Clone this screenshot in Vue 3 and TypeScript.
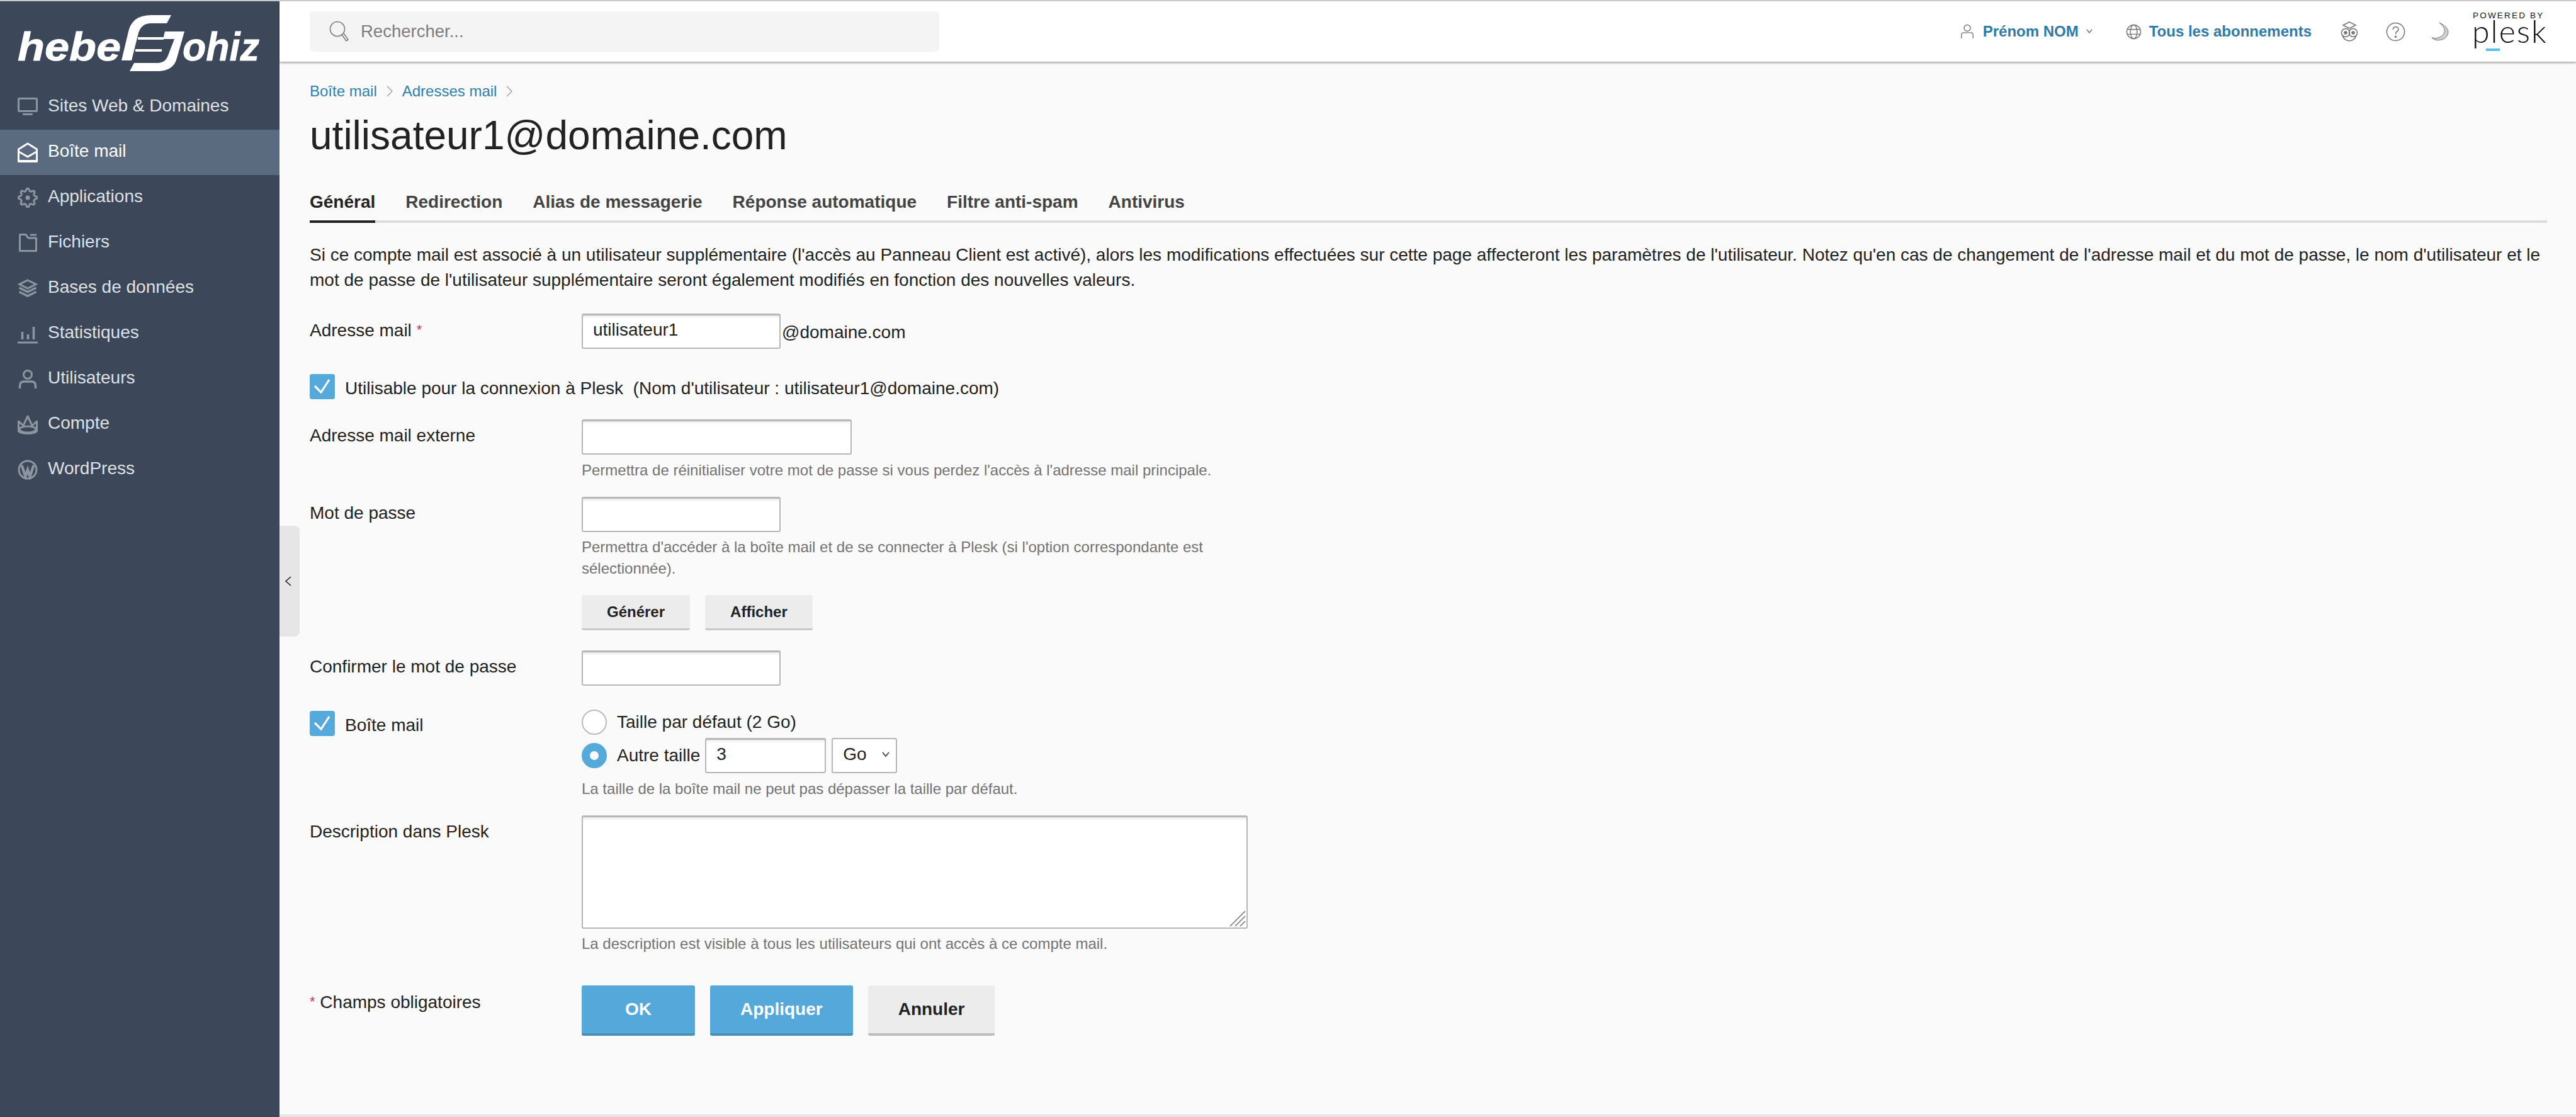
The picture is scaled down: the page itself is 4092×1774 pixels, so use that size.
<script setup lang="ts">
const nav: { id: string; label: string; active?: boolean }[] = [
  { id: 'web', label: 'Sites Web & Domaines' },
  { id: 'mail', label: 'Boîte mail', active: true },
  { id: 'apps', label: 'Applications' },
  { id: 'files', label: 'Fichiers' },
  { id: 'db', label: 'Bases de données' },
  { id: 'stats', label: 'Statistiques' },
  { id: 'users', label: 'Utilisateurs' },
  { id: 'account', label: 'Compte' },
  { id: 'wp', label: 'WordPress' },
]
const tabs = ['Général', 'Redirection', 'Alias de messagerie', 'Réponse automatique', 'Filtre anti-spam', 'Antivirus']

const gearPoints = (() => {
  const pts: string[] = []
  const n = 8
  for (let i = 0; i < n * 4; i++) {
    const a = ((i - 0.5) / (n * 4)) * Math.PI * 2
    const r = i % 4 < 2 ? 14.5 : 11
    pts.push(`${(16 + r * Math.cos(a)).toFixed(1)},${(16 + r * Math.sin(a)).toFixed(1)}`)
  }
  return pts.join(' ')
})()
</script>

<template>
  <div class="app">
    <aside class="side">
      <svg class="logo" viewBox="0 0 396 92" width="396" height="92">
        <text x="0" y="73" class="logo-text" textLength="164" lengthAdjust="spacingAndGlyphs">hebe</text>
        <path d="M165 73 L176 27 Q182 1 212 1 L244 1 L237 14 L212 14 Q197 14 192 29 L181 73 Z" fill="#fff" />
        <path d="M234 27 L265 27 L253 69 Q248 90 222 90 L178 90 L185 77 L222 77 Q235 77 239 65 L249 39 L231 39 Z" fill="#fff" />
        <path d="M191 38 L232 38 M187 57 L229 57" stroke="#fff" stroke-width="4" fill="none" />
        <text x="262" y="73" class="logo-text" textLength="122" lengthAdjust="spacingAndGlyphs">ohiz</text>
      </svg>
      <nav class="nav">
        <a v-for="item in nav" :key="item.id" class="nav-item" :class="{ active: item.active }">
          <svg class="nav-icon" viewBox="0 0 32 32" width="32" height="32" fill="none" stroke="currentColor" stroke-width="3">
            <template v-if="item.id === 'web'">
              <rect x="1.5" y="2.5" width="29" height="20" rx="1" />
              <rect x="8" y="26" width="16" height="3" rx="1" fill="currentColor" stroke="none" />
            </template>
            <template v-else-if="item.id === 'mail'">
              <path d="M16 2 L30.5 11 V30.5 H1.5 V11 Z" stroke-linejoin="round" />
              <path d="M2 15 L16 23 L30 15" />
              <path d="M1 28 H31 V32 H1 Z" fill="currentColor" stroke="none" />
            </template>
            <template v-else-if="item.id === 'apps'">
              <polygon :points="gearPoints" stroke-linejoin="round" />
              <circle cx="16" cy="16" r="3.5" fill="currentColor" stroke="none" />
            </template>
            <template v-else-if="item.id === 'files'">
              <path d="M3.5 2.5 H13 L17 8 H29.5 V28.5 H3.5 Z" stroke-linejoin="round" />
              <path d="M20 3 H30" />
            </template>
            <template v-else-if="item.id === 'db'">
              <path d="M16 3 L29 9.5 L16 16 L3 9.5 Z" stroke-width="3" />
              <path d="M2.5 15 L16 21.5 L29.5 15" stroke-width="3.4" />
              <path d="M2.5 21.5 L16 28 L29.5 21.5" stroke-width="3.4" />
            </template>
            <template v-else-if="item.id === 'stats'">
              <path d="M7.5 13 V25 M16.5 17 V25 M25.5 5 V25" stroke-width="3.6" />
              <path d="M1 30 H31" stroke-linecap="round" />
            </template>
            <template v-else-if="item.id === 'users'">
              <circle cx="16" cy="9" r="6.5" />
              <path d="M3.5 31 V27 Q3.5 20 10 20 H22 Q28.5 20 28.5 27 V31" stroke-width="3.4" />
            </template>
            <template v-else-if="item.id === 'account'">
              <path d="M1.5 11 L9 18 L16 3 L23 18 L30.5 11 V27 Q26 30.5 16 30.5 Q6 30.5 1.5 27 Z" stroke-linejoin="round" />
              <ellipse cx="16" cy="24" rx="13" ry="5" />
            </template>
            <template v-else>
              <circle cx="16" cy="16" r="14" stroke-width="3" />
              <path d="M6.5 9 L12.5 27 L16 16 L19.5 27 L25.5 9" stroke-width="4.2" />
            </template>
          </svg>
          <span>{{ item.label }}</span>
        </a>
      </nav>
    </aside>

    <button class="collapse" aria-label="Réduire">
      <svg viewBox="0 0 12 16" width="12" height="16" fill="none" stroke="#222" stroke-width="1.6"><path d="M10 1 L2 8 L10 15" /></svg>
    </button>

    <div class="main">
      <header class="topbar">
        <div class="search">
          <svg viewBox="0 0 32 34" width="32" height="34" fill="none" stroke="#7d7d7d" stroke-width="1.6">
            <circle cx="13" cy="13" r="11.5" />
            <path d="M20 22 L27 32 L30 30 L23 20" />
          </svg>
          <span>Rechercher...</span>
        </div>
        <div class="top-right">
          <a class="top-link user">
            <svg viewBox="0 0 24 26" width="22" height="24" fill="none" stroke="#777" stroke-width="1.5">
              <circle cx="12" cy="7" r="5.5" />
              <path d="M2 25 V19 Q2 15 6 15 H18 Q22 15 22 19 V25" />
            </svg>
            <b>Prénom NOM</b>
            <svg class="caret" viewBox="0 0 10 8" width="10" height="8" fill="none" stroke="#666" stroke-width="1.3"><path d="M1 1 L5 6 L9 1" /></svg>
          </a>
          <a class="top-link subs">
            <svg viewBox="0 0 26 26" width="25" height="25" fill="none" stroke="#777" stroke-width="1.5">
              <circle cx="13" cy="13" r="11.5" />
              <ellipse cx="13" cy="13" rx="5.5" ry="11.5" />
              <path d="M2.5 9 H23.5 M2.5 17 H23.5" />
            </svg>
            <b>Tous les abonnements</b>
          </a>
          <svg class="ic owl" viewBox="0 0 28 32" width="28" height="32" fill="none" stroke="#777" stroke-width="1.6">
            <path d="M14 1 L24 6 L14 11 L4 6 Z" />
            <circle cx="8" cy="18" r="6.5" />
            <circle cx="20" cy="18" r="6.5" />
            <path d="M3 22 Q5 30 14 31 Q23 30 25 22" />
            <circle cx="8" cy="18" r="2" fill="#777" />
            <circle cx="20" cy="18" r="2" fill="#777" />
          </svg>
          <svg class="ic help" viewBox="0 0 32 32" width="31" height="31" fill="none" stroke="#777" stroke-width="1.6">
            <circle cx="16" cy="16" r="14.5" />
            <path d="M11.5 12.5 Q12 8 16 8 Q20.5 8 20.5 12 Q20.5 14.5 17.5 16 Q16 17 16 20" />
            <circle cx="16" cy="24" r="1" fill="#777" />
          </svg>
          <svg class="ic moon" viewBox="0 0 28 30" width="28" height="30" fill="#d0d0d0" stroke="#777" stroke-width="1">
            <path d="M13 1 Q28 8 27 17 Q25 28 11 29 Q4 29 1 25 Q8 27 14 24 Q23 19 21 11 Q19 5 13 1 Z" />
          </svg>
          <div class="plesk">
            <span class="powered">POWERED BY</span>
            <span class="plesk-word">plesk</span>
            <i class="plesk-bar"></i>
          </div>
        </div>
      </header>

      <main class="content">
        <div class="crumbs">
          <a>Boîte mail</a>
          <svg viewBox="0 0 10 18" width="10" height="18" fill="none" stroke="#999" stroke-width="1.3"><path d="M1 1 L9 9 L1 17" /></svg>
          <a>Adresses mail</a>
          <svg viewBox="0 0 10 18" width="10" height="18" fill="none" stroke="#999" stroke-width="1.3"><path d="M1 1 L9 9 L1 17" /></svg>
        </div>
        <h1 class="title">utilisateur1@domaine.com</h1>
        <div class="tabs">
          <a v-for="(t, i) in tabs" :key="t" class="tab" :class="{ current: i === 0 }">{{ t }}</a>
        </div>
        <p class="intro">Si ce compte mail est associé à un utilisateur supplémentaire (l'accès au Panneau Client est activé), alors les modifications effectuées sur cette page affecteront les paramètres de l'utilisateur. Notez qu'en cas de changement de l'adresse mail et du mot de passe, le nom d'utilisateur et le mot de passe de l'utilisateur supplémentaire seront également modifiés en fonction des nouvelles valeurs.</p>

        <form class="form" @submit.prevent>
          <div class="row r-mail">
            <label class="lab">Adresse mail <em>*</em></label>
            <div class="field inline">
              <input class="inp w-s" type="text" value="utilisateur1" />
              <span class="suffix">@domaine.com</span>
            </div>
          </div>

          <div class="check-row r-login">
            <span class="check">
              <svg viewBox="0 0 40 40" width="40" height="40" fill="none" stroke="#fff" stroke-width="3.2"><path d="M8 19 L18 29 L31 9" /></svg>
            </span>
            <span class="check-text">Utilisable pour la connexion à Plesk&nbsp; (Nom d'utilisateur : utilisateur1@domaine.com)</span>
          </div>

          <div class="row r-ext">
            <label class="lab">Adresse mail externe</label>
            <div class="field">
              <input class="inp w-m" type="text" />
              <p class="hint">Permettra de réinitialiser votre mot de passe si vous perdez l'accès à l'adresse mail principale.</p>
            </div>
          </div>

          <div class="row r-pass">
            <label class="lab">Mot de passe</label>
            <div class="field">
              <input class="inp w-s" type="text" />
              <p class="hint tight">Permettra d'accéder à la boîte mail et de se connecter à Plesk (si l'option correspondante est sélectionnée).</p>
              <div class="small-btns">
                <button class="btn-s" type="button">Générer</button>
                <button class="btn-s" type="button">Afficher</button>
              </div>
            </div>
          </div>

          <div class="row r-confirm">
            <label class="lab">Confirmer le mot de passe</label>
            <div class="field"><input class="inp w-s" type="text" /></div>
          </div>

          <div class="row r-box">
            <div class="check-row boxlab">
              <span class="check">
                <svg viewBox="0 0 40 40" width="40" height="40" fill="none" stroke="#fff" stroke-width="3.2"><path d="M8 19 L18 29 L31 9" /></svg>
              </span>
              <span class="check-text">Boîte mail</span>
            </div>
            <div class="field">
              <div class="radio-line first">
                <span class="radio"></span>
                <span>Taille par défaut (2 Go)</span>
              </div>
              <div class="radio-line second">
                <span class="radio on"></span>
                <span class="other">Autre taille</span>
                <input class="inp w-num" type="text" value="3" />
                <div class="sel">
                  <span>Go</span>
                  <svg viewBox="0 0 12 8" width="12" height="8" fill="none" stroke="#333" stroke-width="1.6"><path d="M1 1 L6 7 L11 1" /></svg>
                </div>
              </div>
              <p class="hint">La taille de la boîte mail ne peut pas dépasser la taille par défaut.</p>
            </div>
          </div>

          <div class="row r-desc">
            <label class="lab">Description dans Plesk</label>
            <div class="field">
              <div class="area-wrap">
                <textarea class="inp area"></textarea>
                <svg class="grip" viewBox="0 0 26 26" width="26" height="26" fill="none" stroke="#777" stroke-width="1.6">
                  <path d="M1 25 L25 1 M9 25 L25 9 M17 25 L25 17" />
                </svg>
              </div>
              <p class="hint tight">La description est visible à tous les utilisateurs qui ont accès à ce compte mail.</p>
            </div>
          </div>

          <div class="row r-actions">
            <div class="req"><em>*</em> Champs obligatoires</div>
            <div class="actions">
              <button class="btn primary ok" type="button">OK</button>
              <button class="btn primary" type="button">Appliquer</button>
              <button class="btn" type="button">Annuler</button>
            </div>
          </div>
        </form>
      </main>
    </div>
  </div>
</template>

<style>
html, body { margin: 0; background: #fafafa; }
</style>

<style scoped>
.app {
  position: relative;
  display: flex;
  box-sizing: border-box;
  width: 4092px;
  height: 1774px;
  border-top: 2px solid #c9c9c9;
  overflow: hidden;
  font-family: "Liberation Sans", Arial, sans-serif;
  font-size: 28px;
  color: #222;
  background: #fafafa;
}
.side { width: 444px; flex: none; background: #3c4859; }
.logo { display: block; margin: 21px 0 0 28px; }
.logo-text { font: italic 700 63px "Liberation Sans", Arial, sans-serif; fill: #fff; stroke: #fff; stroke-width: 0.8px; }
.nav { margin-top: 19px; }
.nav-item {
  display: flex;
  align-items: center;
  height: 72px;
  padding-left: 28px;
  gap: 16px;
  font-size: 28px;
  color: #dde0e4;
  line-height: 66px;
}
.nav-item span { position: relative; top: -2px; }
.nav-icon { color: #8d95a1; flex: none; }
.nav-item.active { background: #5b6b7f; color: #fff; }
.nav-item.active .nav-icon { color: #fff; }

.collapse {
  position: absolute;
  left: 444px;
  top: 833px;
  width: 32px;
  height: 176px;
  border: 0;
  padding: 0 4px 0 0;
  border-radius: 0 8px 8px 0;
  background: #e6e6e6;
  display: flex;
  align-items: center;
  justify-content: center;
}

.main { flex: 1; display: flex; flex-direction: column; min-width: 0; }
.topbar {
  height: 96px;
  flex: none;
  box-sizing: border-box;
  display: flex;
  align-items: center;
  justify-content: space-between;
  padding: 0 46px 0 48px;
  background: #fff;
  box-shadow: 0 2px 3px rgba(0, 0, 0, 0.35);
  position: relative;
}
.search {
  width: 1000px;
  height: 64px;
  box-sizing: border-box;
  border-radius: 6px;
  background: #f4f4f4;
  display: flex;
  align-items: center;
  gap: 18px;
  padding-left: 31px;
  color: #7e7e7e;
  font-size: 27.5px;
}
.top-right { display: flex; align-items: center; }
.top-link { display: flex; align-items: center; color: #2f7aa8; font-size: 24px; }
.user { gap: 14px; }
.caret { margin-left: -2px; }
.subs { gap: 12px; margin-left: 53px; }
.ic { flex: none; }
.owl { margin-left: 46px; }
.help { margin-left: 44px; }
.moon { margin-left: 41px; }
.plesk { position: relative; width: 118px; height: 66px; margin-left: 38px; color: #111; }
.powered { position: absolute; left: 0; top: 2px; font-size: 13.5px; letter-spacing: 2.2px; line-height: 12px; white-space: nowrap; }
.plesk-word { position: absolute; left: -1px; top: 14px; font: 300 50px/36px Lato, "Liberation Sans", sans-serif; letter-spacing: 2px; }
.plesk-bar { position: absolute; left: 21px; top: 60px; width: 22px; height: 4px; background: #5bc0e8; }

.content { flex: 1; margin: 0 46px 0 48px; padding-top: 30px; position: relative; }
.content::after { content: ""; position: absolute; left: -48px; right: -46px; bottom: 0; height: 4px; background: #e5e5e5; }
.crumbs { display: flex; align-items: center; gap: 15px; height: 34px; font-size: 24px; color: #2f7fb0; }
.title { margin: 17px 0 0; font-size: 64px; line-height: 72px; font-weight: 400; color: #222; }
.tabs { display: flex; gap: 48px; margin-top: 50px; border-bottom: 4px solid #dcdcdc; }
.tab { padding-bottom: 9px; line-height: 40px; font-weight: 700; font-size: 28px; color: #444; margin-bottom: -4px; border-bottom: 4px solid transparent; }
.tab.current { color: #222; border-bottom-color: #222; }
.intro { margin: 31px 0 0; line-height: 40px; font-size: 28px; }

.form { margin-top: 33px; }
.row { display: grid; grid-template-columns: 432px 1fr; }
.lab { line-height: 52px; }
em { color: #d0304f; font-style: normal; font-size: 22px; vertical-align: 3px; }
.field { min-width: 0; }
.inline { display: flex; align-items: center; }
.suffix { margin-left: 2px; position: relative; top: 2px; }
.inp {
  display: block;
  box-sizing: border-box;
  height: 56px;
  padding: 0 16px 6px;
  border: 2px solid #b6b6b6;
  border-top-width: 3px;
  border-radius: 3px;
  background: #fff;
  box-shadow: inset 0 5px 4px -3px rgba(0, 0, 0, 0.1);
  font: 28px "Liberation Sans", Arial, sans-serif;
  color: #222;
  outline: none;
}
.w-s { width: 316px; }
.w-m { width: 429px; }
.w-num { width: 192px; }
.hint { margin: 8px 0 0; max-width: 1058px; line-height: 34px; font-size: 24px; color: #737373; }
.hint.tight { margin-top: 7px; }
.check-row { display: flex; align-items: center; gap: 16px; height: 40px; }
.check-text { position: relative; top: 3px; }
.check {
  width: 40px;
  height: 40px;
  flex: none;
  border-radius: 4px;
  background: #56a9db;
  display: flex;
}
.r-login { margin-top: 40px; }
.r-ext { margin-top: 32px; }
.r-pass { margin-top: 25px; }
.small-btns { display: flex; gap: 24px; margin-top: 25px; }
.btn-s {
  height: 56px;
  padding: 0 40px;
  border: 0;
  border-bottom: 3px solid #c6c6c6;
  border-radius: 3px;
  background: #ececec;
  font: 700 24px "Liberation Sans", Arial, sans-serif;
  color: #222;
}
.r-confirm { margin-top: 32px; }
.r-box { margin-top: 38px; }
.boxlab { margin-top: 2px; }
.radio-line { display: flex; align-items: center; }
.radio-line.first { height: 40px; gap: 16px; }
.radio-line.second { height: 56px; margin-top: 5px; gap: 16px; }
.other { margin-right: -8px; }
.radio {
  width: 40px;
  height: 40px;
  flex: none;
  box-sizing: border-box;
  border-radius: 50%;
  border: 2px solid #bbb;
  background: #fff;
}
.radio.on { border: 13px solid #56a9db; }
.sel {
  box-sizing: border-box;
  width: 104px;
  height: 56px;
  margin-left: -7px;
  border: 2px solid #b6b6b6;
  border-radius: 3px;
  background: #fff;
  display: flex;
  align-items: center;
  justify-content: space-between;
  padding: 0 10px 4px 16px;
}
.r-desc { margin-top: 25px; }
.area-wrap { position: relative; width: 1058px; }
.area { width: 1058px; height: 180px; resize: none; }
.grip { position: absolute; right: 3px; bottom: 3px; }
.r-actions { margin-top: 49px; }
.req { line-height: 52px; }
.actions { display: flex; gap: 24px; }
.btn {
  height: 80px;
  padding: 0 48px;
  border: 0;
  border-bottom: 4px solid #bdbdbd;
  border-radius: 3px;
  background: #ececec;
  font: 700 28px "Liberation Sans", Arial, sans-serif;
  color: #222;
}
.btn.primary { background: #55a8da; border-bottom-color: #4a90ba; color: #fff; }
.btn.ok { min-width: 180px; }
</style>
